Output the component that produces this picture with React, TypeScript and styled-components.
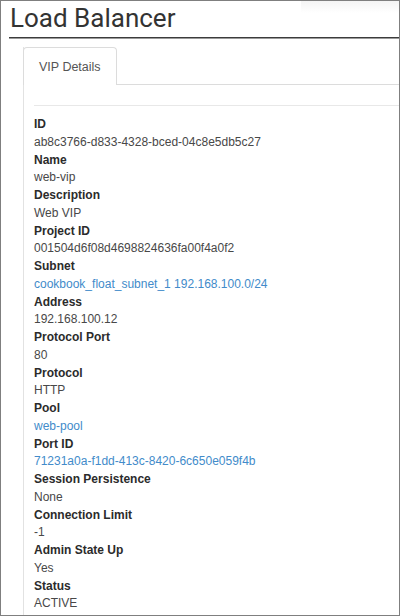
import React from "react";
import styled, { createGlobalStyle } from "styled-components";

const Global = createGlobalStyle`
  html, body { margin: 0; padding: 0; background: #fff; }
  #root { width: 400px; height: 616px; }
  * { box-sizing: border-box; }
`;

const Frame = styled.div`
  width: 400px;
  height: 616px;
  border: 1px solid #7f7f7f;
  overflow: hidden;
  background: linear-gradient(to bottom, #f4f4f4 0px, #fff 12px) no-repeat 300px 0 / 100px 12px, #fff;
  font-family: "Liberation Sans", Arial, sans-serif;
  padding-left: 8px;
`;

const Header = styled.div`
  height: 37px;
  border-bottom: 1px solid #3c3c3c;
  box-shadow: 0 1px 0 #9a9a9a;
  padding-left: 1px;
`;

const Title = styled.h1`
  margin: 0;
  font-family: Roboto, "Noto Sans", sans-serif;
  font-weight: 400;
  font-size: 26px;
  line-height: 35px;
  color: #333;
`;

const Panel = styled.div`
  margin-left: 14px;
  margin-top: 9px;
  border-left: 1px solid #e2e2e2;
  height: 600px;
`;

const TabBar = styled.div`
  display: flex;
  align-items: flex-end;
  margin-left: -1px;
`;

const Tab = styled.div`
  width: 94px;
  height: 38px;
  border: 1px solid #dcdcdc;
  border-bottom: none;
  border-radius: 4px 4px 0 0;
  background: #fff;
  display: flex;
  align-items: center;
  padding-left: 15px;
  font-size: 12.5px;
  color: #555;
`;

const TabFill = styled.div`
  flex: 1;
  border-bottom: 1px solid #dcdcdc;
`;

const Content = styled.div`
  padding-left: 10px;
`;

const Separator = styled.div`
  margin-top: 20px;
  border-top: 1px solid #e8e8e8;
`;

const List = styled.dl`
  margin: 10px 0 0 0;
  font-size: 12px;
  line-height: 17.75px;
`;

const Term = styled.dt`
  font-weight: 700;
  color: #2b2b2b;
`;

const Desc = styled.dd<{ $link?: boolean }>`
  margin: 0;
  color: ${(p) => (p.$link ? "#428bca" : "#484848")};
`;

const rows: [string, string, boolean?][] = [
  ["ID", "ab8c3766-d833-4328-bced-04c8e5db5c27"],
  ["Name", "web-vip"],
  ["Description", "Web VIP"],
  ["Project ID", "001504d6f08d4698824636fa00f4a0f2"],
  ["Subnet", "cookbook_float_subnet_1 192.168.100.0/24", true],
  ["Address", "192.168.100.12"],
  ["Protocol Port", "80"],
  ["Protocol", "HTTP"],
  ["Pool", "web-pool", true],
  ["Port ID", "71231a0a-f1dd-413c-8420-6c650e059f4b", true],
  ["Session Persistence", "None"],
  ["Connection Limit", "-1"],
  ["Admin State Up", "Yes"],
  ["Status", "ACTIVE"],
];

export default function App() {
  return (
    <>
      <Global />
      <Frame>
        <Header>
          <Title>Load Balancer</Title>
        </Header>
        <Panel>
          <TabBar>
            <Tab>VIP Details</Tab>
            <TabFill />
          </TabBar>
          <Content>
            <Separator />
            <List>
              {rows.map(([k, v, link]) => (
                <React.Fragment key={k}>
                  <Term>{k}</Term>
                  <Desc $link={link}>{v}</Desc>
                </React.Fragment>
              ))}
            </List>
          </Content>
        </Panel>
      </Frame>
    </>
  );
}
